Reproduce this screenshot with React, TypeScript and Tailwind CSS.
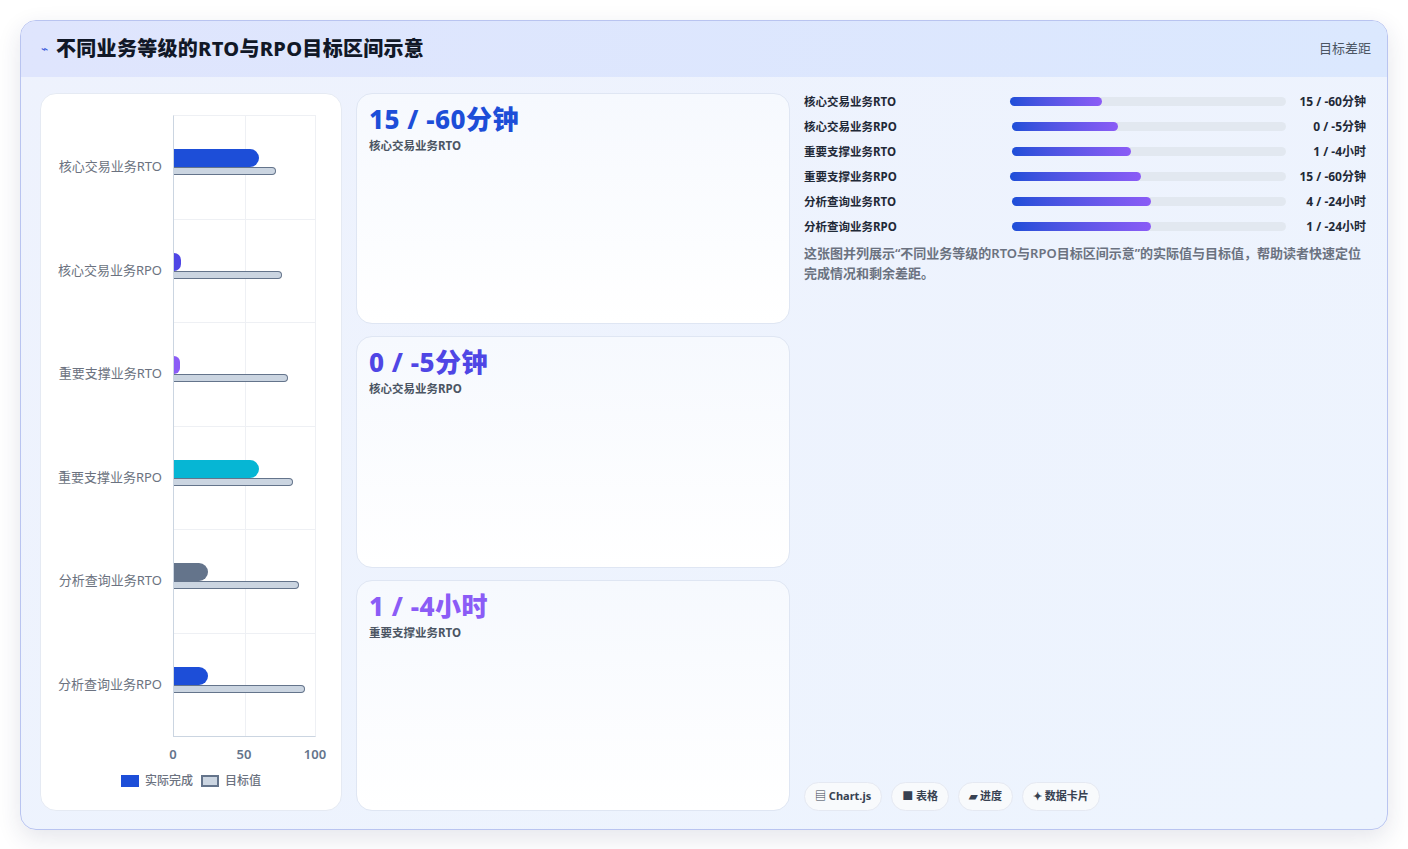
import React from "react";

const rows = [
  { n: "核心交易业务RTO", a: 60, t: 72, c: "#1d4ed8" },
  { n: "核心交易业务RPO", a: 5, t: 76, c: "#4f46e5" },
  { n: "重要支撑业务RTO", a: 4, t: 80, c: "#8b5cf6" },
  { n: "重要支撑业务RPO", a: 60, t: 84, c: "#06b6d4" },
  { n: "分析查询业务RTO", a: 24, t: 88, c: "#64748b" },
  { n: "分析查询业务RPO", a: 24, t: 92, c: "#1d4ed8" },
];
const prog = [
  { n: "核心交易业务RTO", w: 92, v: "15 / -60分钟", ml: 0 },
  { n: "核心交易业务RPO", w: 106, v: "0 / -5分钟", ml: 2 },
  { n: "重要支撑业务RTO", w: 119, v: "1 / -4小时", ml: 2 },
  { n: "重要支撑业务RPO", w: 131, v: "15 / -60分钟", ml: 0 },
  { n: "分析查询业务RTO", w: 139, v: "4 / -24小时", ml: 2 },
  { n: "分析查询业务RPO", w: 139, v: "1 / -24小时", ml: 2 },
];
const cards = [
  { v: "15 / -60分钟", l: "核心交易业务RTO", c: "text-[#1d4ed8]" },
  { v: "0 / -5分钟", l: "核心交易业务RPO", c: "text-[#4f46e5]" },
  { v: "1 / -4小时", l: "重要支撑业务RTO", c: "text-[#8b5cf6]" },
];

export default function App() {
  return (
    <div className="w-[1408px] h-[849px] bg-white p-5 pb-[19px]" style={{ fontFamily: '"Noto Sans", "Noto Sans CJK SC", sans-serif' }}>
      <div className="h-full rounded-2xl border border-[#b9c4f0] bg-gradient-to-br from-[#eef2fd] to-[#edf4fe] shadow-[0_8px_24px_rgba(30,41,90,0.12)] overflow-hidden flex flex-col">
        <div className="h-[56px] shrink-0 bg-gradient-to-r from-[#dfe5fd] to-[#dbe8fe] flex items-center justify-between px-5 pr-4">
          <div className="flex items-center gap-2">
            <span className="text-[#3b5bdb] text-[12px]">⌁</span>
            <span className="text-[20px] font-extrabold text-[#111827] tracking-[0.3px]">不同业务等级的RTO与RPO目标区间示意</span>
          </div>
          <span className="text-[13px] text-[#4b5563]">目标差距</span>
        </div>
        <div className="flex-1 flex gap-[14px] px-[19px] pt-[16px] pb-[18px]">
          <div className="w-[302px] shrink-0 bg-white rounded-2xl border border-[#e5eaf3] flex flex-col pt-[21px]">
            <div className="flex">
              <div className="w-[132px] flex flex-col">
                {rows.map((r) => (
                  <div key={r.n} className="h-[103.6px] flex items-center justify-end pr-[11px] text-[13px] text-[#6b7280]">{r.n}</div>
                ))}
              </div>
              <div className="relative w-[143px] h-[622px] border-l border-[#cbd5e1] border-t border-t-[#eef0f4] border-r border-r-[#eef0f4] border-b border-b-[#cbd5e1]">
                <div className="absolute left-[71px] top-0 bottom-0 w-px bg-[#eef0f4]" />
                {rows.map((r) => (
                  <div key={r.n} className="relative h-[103.6px] border-b border-[#eef0f4] last:border-b-0">
                    <div className="absolute left-0 top-[33px] h-[18px] rounded-r-[9px]" style={{ width: `${r.a * 1.42}px`, background: r.c }} />
                    <div className="absolute left-0 top-[51px] h-[8px] rounded-r-[4px] bg-[#cbd5e1] border-[1.5px] border-[#64748b] border-l-0" style={{ width: `${r.t * 1.42}px` }} />
                  </div>
                ))}
              </div>
            </div>
            <div className="relative h-[30px] ml-[132px] w-[143px] text-[13px] font-semibold text-[#64748b]">
              <span className="absolute left-0 -translate-x-1/2 top-[8px]">0</span>
              <span className="absolute left-[71px] -translate-x-1/2 top-[8px]">50</span>
              <span className="absolute left-[142px] -translate-x-1/2 top-[8px]">100</span>
            </div>
            <div className="flex items-center justify-center gap-2 mt-[5px] text-[12px] font-medium text-[#6b7280]">
              <span className="flex items-center gap-[6px]"><span className="w-[18px] h-[12px] bg-[#1d4ed8]" />实际完成</span>
              <span className="flex items-center gap-[6px]"><span className="w-[18px] h-[12px] bg-[#cbd5e1] border-2 border-[#64748b]" />目标值</span>
            </div>
          </div>
          <div className="w-[434px] shrink-0 flex flex-col gap-[12px]">
            {cards.map((c) => (
              <div key={c.l} className="flex-1 rounded-2xl border border-[#dfe6f3] bg-gradient-to-b from-[#f6f9fe] to-white px-[12px] pt-[7px]">
                <div className={`text-[26px] font-extrabold leading-[36px] tracking-[0.5px] ${c.c}`}>{c.v}</div>
                <div className="text-[11.5px] font-bold text-[#4b5563]">{c.l}</div>
              </div>
            ))}
          </div>
          <div className="flex-1 flex flex-col pr-[2px]">
            <div className="flex flex-col gap-[6px] -mt-[1px]">
              {prog.map((p) => (
                <div key={p.n + p.v} className="flex items-center h-[19px] text-[11.5px] font-bold text-[#1f2937]">
                  <span className="w-[206px]">{p.n}</span>
                  <div className="flex-1 h-[9px] rounded-full bg-[#e2e8f0]" style={{ marginLeft: p.ml }}>
                    <div className="h-full rounded-full bg-gradient-to-r from-[#1d4ed8] to-[#8b5cf6]" style={{ width: p.w }} />
                  </div>
                  <span className="w-[80px] text-right text-[12px]">{p.v}</span>
                </div>
              ))}
            </div>
            <p className="mt-[7px] text-[13px] leading-[20px] text-[#6b7280] font-semibold">这张图并列展示“不同业务等级的RTO与RPO目标区间示意”的实际值与目标值，帮助读者快速定位完成情况和剩余差距。</p>
            <div className="mt-auto flex gap-[9px] text-[11px] font-bold text-[#374151]">
              {["▤ Chart.js", "■ 表格", "▰ 进度", "✦ 数据卡片"].map((t) => (
                <span key={t} className="h-[29px] px-[10px] flex items-center rounded-full bg-[#f8fafc] border border-[#e5e9f2]">{t}</span>
              ))}
            </div>
          </div>
        </div>
      </div>
    </div>
  );
}
